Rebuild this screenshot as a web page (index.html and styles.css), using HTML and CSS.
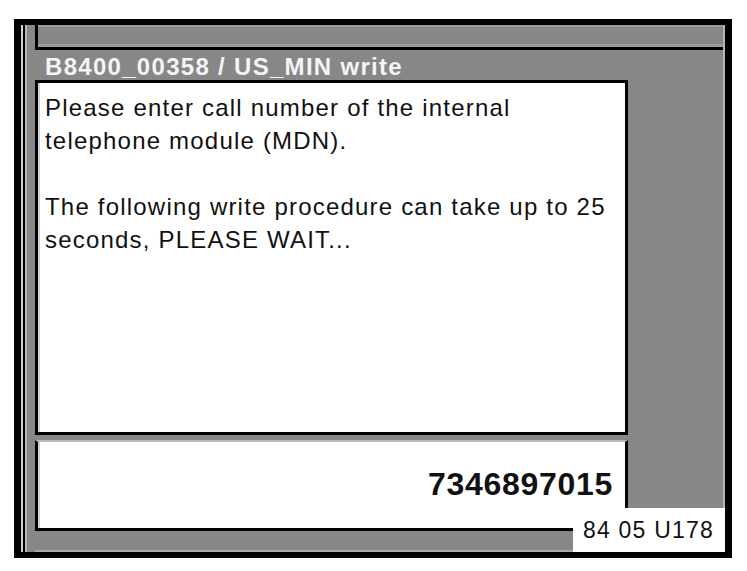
FILE: index.html
```
<!DOCTYPE html>
<html>
<head>
<meta charset="utf-8">
<link rel="stylesheet" href="styles.css">
</head>
<body>
<div class="frame">
  <div class="inner">
    <div class="toppanel"></div>
    <div class="titlebar">B8400_00358 / US_MIN write</div>
    <div class="main">
      <div class="boxes">
        <div class="msgbox">
          <p class="line">Please enter call number of the internal</p>
          <p class="line">telephone module (MDN).</p>
          <p class="line">&nbsp;</p>
          <p class="line">The following write procedure can take up to 25</p>
          <p class="line">seconds, PLEASE WAIT...</p>
        </div>
        <div class="sep"></div>
        <div class="inputbox"><span class="number">7346897015</span></div>
      </div>
    </div>
    <div class="bottomstrip"></div>
    <div class="label">84 05 U178</div>
  </div>
</div>
</body>
</html>
```
FILE: styles.css
```
* { box-sizing: border-box; }
html, body { margin: 0; padding: 0; background: #fff; }
body { font-family: "Liberation Sans", Arial, sans-serif; }

.frame {
  width: 718px;
  height: 539px;
  margin: 19px 0 0 14px;
  padding: 6px 7px 6px 7px;
  background: #000;
}

.inner {
  position: relative;
  height: 527px;
  display: flex;
  flex-direction: column;
  padding-left: 14px;
  background:
    linear-gradient(to right, #d2d2d2 0 2px, #000 2px 4px, #b8b8b8 4px 6px, transparent 6px),
    #878787;
  border-right: 2px solid #b4b4b4;
}

.toppanel {
  height: 25px;
  flex: none;
  background: #878787;
  border-left: 3px solid #000;
  border-bottom: 3px solid #000;
  box-shadow: inset 0 -3px 0 #9c9c9c, inset 0 2px 0 #9a9a9a;
}

.titlebar {
  height: 30px;
  flex: none;
  padding: 2px 0 0 10px;
  color: #f4f4f4;
  font-weight: bold;
  font-size: 24px;
  line-height: 30px;
  letter-spacing: 1.3px;
  white-space: nowrap;
}

.main {
  display: flex;
  flex: none;
}

.boxes {
  width: 593px;
  display: flex;
  flex-direction: column;
}

.msgbox {
  height: 355px;
  background: #fff;
  border: 3px solid #000;
  box-shadow: inset 2px 0 0 #cfcfcf;
  padding: 8px 0 0 7px;
}

.line {
  margin: 0;
  font-size: 24px;
  line-height: 33px;
  letter-spacing: 1.2px;
  color: #111;
  white-space: nowrap;
}

.sep {
  height: 5px;
  background: #878787;
}

.inputbox {
  height: 91px;
  background: #fff;
  border-left: 3px solid #000;
  border-right: 3px solid #000;
  border-bottom: 3px solid #000;
  border-top: 2px solid #b8b8b8;
  box-shadow: inset 2px 0 0 #cfcfcf;
  padding: 26px 12px 0 0;
  text-align: right;
}

.number {
  font-size: 32px;
  line-height: 32px;
  font-weight: bold;
  letter-spacing: 0.7px;
  color: #111;
}

.bottomstrip {
  flex: 1;
  box-shadow: inset 0 -2px 0 #a8a8a8;
}

.label {
  position: absolute;
  left: 552px;
  top: 483px;
  right: -2px;
  bottom: 0;
  background: #fff;
  color: #111;
  font-size: 23px;
  letter-spacing: 1.2px;
  line-height: 44px;
  padding-left: 10px;
  white-space: nowrap;
}
```
